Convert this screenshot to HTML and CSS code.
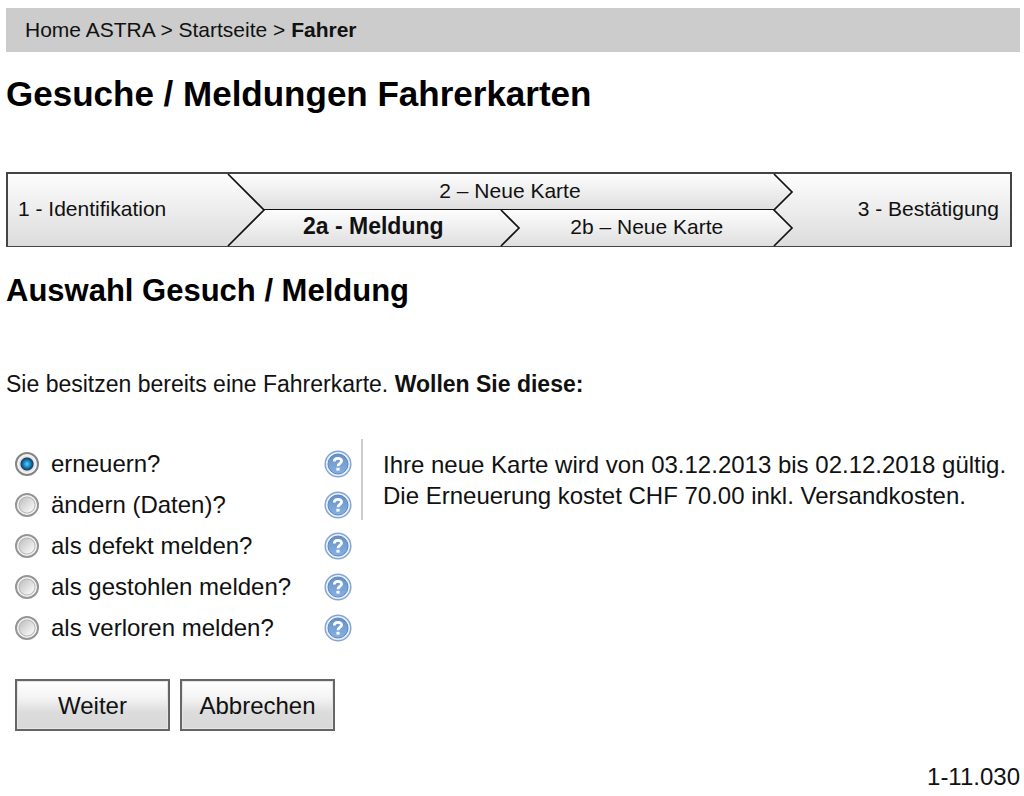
FILE: index.html
```html
<!DOCTYPE html>
<html lang="de">
<head>
<meta charset="utf-8">
<title>Gesuche / Meldungen Fahrerkarten</title>
<link rel="stylesheet" href="styles.css">
</head>
<body>
<svg class="defs" aria-hidden="true">
  <defs>
    <linearGradient id="disc" x1="0" y1="0" x2="0" y2="1">
      <stop offset="0" stop-color="#6590c8"/><stop offset="1" stop-color="#86b2e2"/>
    </linearGradient>
    <symbol id="help" viewBox="0 0 28 28">
      <circle cx="14" cy="14" r="12.8" fill="#e9f0fa" stroke="#86a6d3" stroke-width="1.5"/>
      <circle cx="14" cy="14" r="10" fill="url(#disc)" stroke="#5a87c2"/>
      <path d="M10.3 11.5C10.3 7.4 17.6 7.4 17.6 11C17.6 13.4 14 13.6 14 16.2" fill="none" stroke="#fff" stroke-width="2.8"/>
      <rect x="12.4" y="17.8" width="3.2" height="2.8" fill="#fff"/>
    </symbol>
  </defs>
</svg>
<nav class="breadcrumb"><a href="#">Home ASTRA</a> &gt; <a href="#">Startseite</a> &gt; <strong>Fahrer</strong></nav>
<main>
  <h1>Gesuche / Meldungen Fahrerkarten</h1>
  <div class="steps">
    <span class="step first">1 - Identifikation</span>
    <span class="step second">2 – Neue Karte</span>
    <strong class="step second-a">2a - Meldung</strong>
    <span class="step second-b">2b – Neue Karte</span>
    <span class="step third">3 - Bestätigung</span>
    <svg class="edge-one" viewBox="0 0 36 72"><path d="M0 0L36 36L0 72"/></svg>
    <svg class="edge-two" viewBox="0 0 18 36"><path d="M0 0L18 18L0 36"/></svg>
    <svg class="edge-three" viewBox="0 0 18 72"><path d="M0 0L18 18L0 36L18 54L0 72"/></svg>
  </div>
  <h2>Auswahl Gesuch / Meldung</h2>
  <p class="question">Sie besitzen bereits eine Fahrerkarte. <strong>Wollen Sie diese:</strong></p>
  <form>
    <div class="choice">
      <div class="options">
        <div class="option"><input type="radio" name="art" id="o1" checked><label for="o1">erneuern?</label><button type="button" class="help" aria-label="Hilfe"><svg><use href="#help"/></svg></button></div>
        <div class="option"><input type="radio" name="art" id="o2"><label for="o2">ändern (Daten)?</label><button type="button" class="help" aria-label="Hilfe"><svg><use href="#help"/></svg></button></div>
        <div class="option"><input type="radio" name="art" id="o3"><label for="o3">als defekt melden?</label><button type="button" class="help" aria-label="Hilfe"><svg><use href="#help"/></svg></button></div>
        <div class="option"><input type="radio" name="art" id="o4"><label for="o4">als gestohlen melden?</label><button type="button" class="help" aria-label="Hilfe"><svg><use href="#help"/></svg></button></div>
        <div class="option"><input type="radio" name="art" id="o5"><label for="o5">als verloren melden?</label><button type="button" class="help" aria-label="Hilfe"><svg><use href="#help"/></svg></button></div>
      </div>
      <p class="info">Ihre neue Karte wird von 03.12.2013 bis 02.12.2018 gültig.<br>Die Erneuerung kostet CHF 70.00 inkl. Versandkosten.</p>
    </div>
    <div class="actions">
      <button type="submit" class="action">Weiter</button>
      <button type="button" class="action">Abbrechen</button>
    </div>
  </form>
</main>
<footer>1-11.030</footer>
</body>
</html>
```
FILE: styles.css
```css
* { box-sizing: border-box; }
body {
  margin: 0;
  padding: 8px 4px 0 6px;
  background: #fff;
  color: #111;
  font: 24px/31px "Liberation Sans", Arial, sans-serif;
}
h1, h2, p { margin: 0; }
.defs { position: absolute; width: 0; height: 0; }

.breadcrumb {
  padding: 0 19px;
  background: #ccc;
  font-size: 21px;
  line-height: 44px;
}
.breadcrumb a { color: inherit; text-decoration: none; }

h1 { margin-top: 22px; color: #000; font-size: 35px; line-height: 40px; }
h2 { margin-top: 24px; color: #000; font-size: 31px; line-height: 40px; }

.steps {
  display: grid;
  grid-template-columns: 220fr 36px 238fr 18px 256fr 18px 218fr;
  grid-template-rows: 36px 36px;
  margin: 58px 8px 0 0;
  border: 2px solid #444;
  border-width: 2px 2px 1px;
  background: linear-gradient(#fdfdfd, #dcdcdc);
  font-size: 21px;
}
.step { display: flex; align-items: center; justify-content: center; padding-bottom: 3px; white-space: nowrap; }
.first { grid-area: 1 / 1 / 3 / 3; justify-content: flex-start; padding-left: 10px; }
.third { grid-area: 1 / 6 / 3 / 8; justify-content: flex-end; padding-right: 11px; }
.second, .second-a, .second-b { background: linear-gradient(#fdfdfd, #dfdfdf); }
.second {
  grid-area: 1 / 2 / 2 / 7;
  clip-path: polygon(0 0, calc(100% - 18px) 0, 100% 50%, calc(100% - 18px) 100%, 36px 100%);
  border-bottom: 1px solid #111;
}
.second-a { grid-area: 2 / 2 / 3 / 5; clip-path: polygon(36px 0, 100% 0, 100% 100%, 0 100%); font-size: 23px; }
.second-b { grid-area: 2 / 4 / 3 / 7; clip-path: polygon(0 0, calc(100% - 18px) 0, 100% 50%, calc(100% - 18px) 100%, 0 100%, 18px 50%); }
.steps svg { z-index: 1; width: 100%; height: 100%; overflow: visible; fill: none; stroke: #111; stroke-width: 1.7; }
.edge-one { grid-area: 1 / 2 / 3 / 3; }
.edge-two { grid-area: 2 / 4 / 3 / 5; }
.edge-three { grid-area: 1 / 6 / 3 / 7; }

.question { margin-top: 58px; font-size: 23px; }

.choice { display: flex; align-items: flex-start; margin-top: 39px; }
.options { flex: none; width: 355px; padding: 4px 9px 0; }
.option { display: flex; align-items: center; height: 41px; }
.option label { flex: 1; margin-left: 12px; white-space: nowrap; }
.option input {
  appearance: none;
  width: 24px;
  height: 24px;
  margin: 0;
  border: 2px solid #959595;
  border-radius: 50%;
  background:
    radial-gradient(circle, transparent 7px, #b5b5b5 8px, #f8f8f8 9px),
    linear-gradient(135deg, #c4c4c4 20%, #f4f4f4 75%);
}
.option input:checked {
  border-color: #858585;
  background: radial-gradient(circle, #5cd0f6 0, #1c8fca 3px, #163c62 6px, #ddd 7px, #f5f5f5 9px);
}
.help { width: 28px; height: 28px; padding: 0; border: 0; background: none; }
.help svg { display: block; width: 28px; height: 28px; }
.info { flex: 1; padding: 10px 0 9px 20px; border-left: 2px solid #ccc; }

.actions { display: flex; gap: 10px; margin: 31px 9px 0; }
.action {
  width: 155px;
  height: 52px;
  padding: 0;
  border: 2px solid #666;
  background: linear-gradient(#fff, #f4f4f4 35%, #dcdcdc 65%, #d8d8d8);
  box-shadow: inset 0 0 0 1px #e4e4e4;
  color: #111;
  font: inherit;
}
footer { margin-top: 30px; text-align: right; }
```
